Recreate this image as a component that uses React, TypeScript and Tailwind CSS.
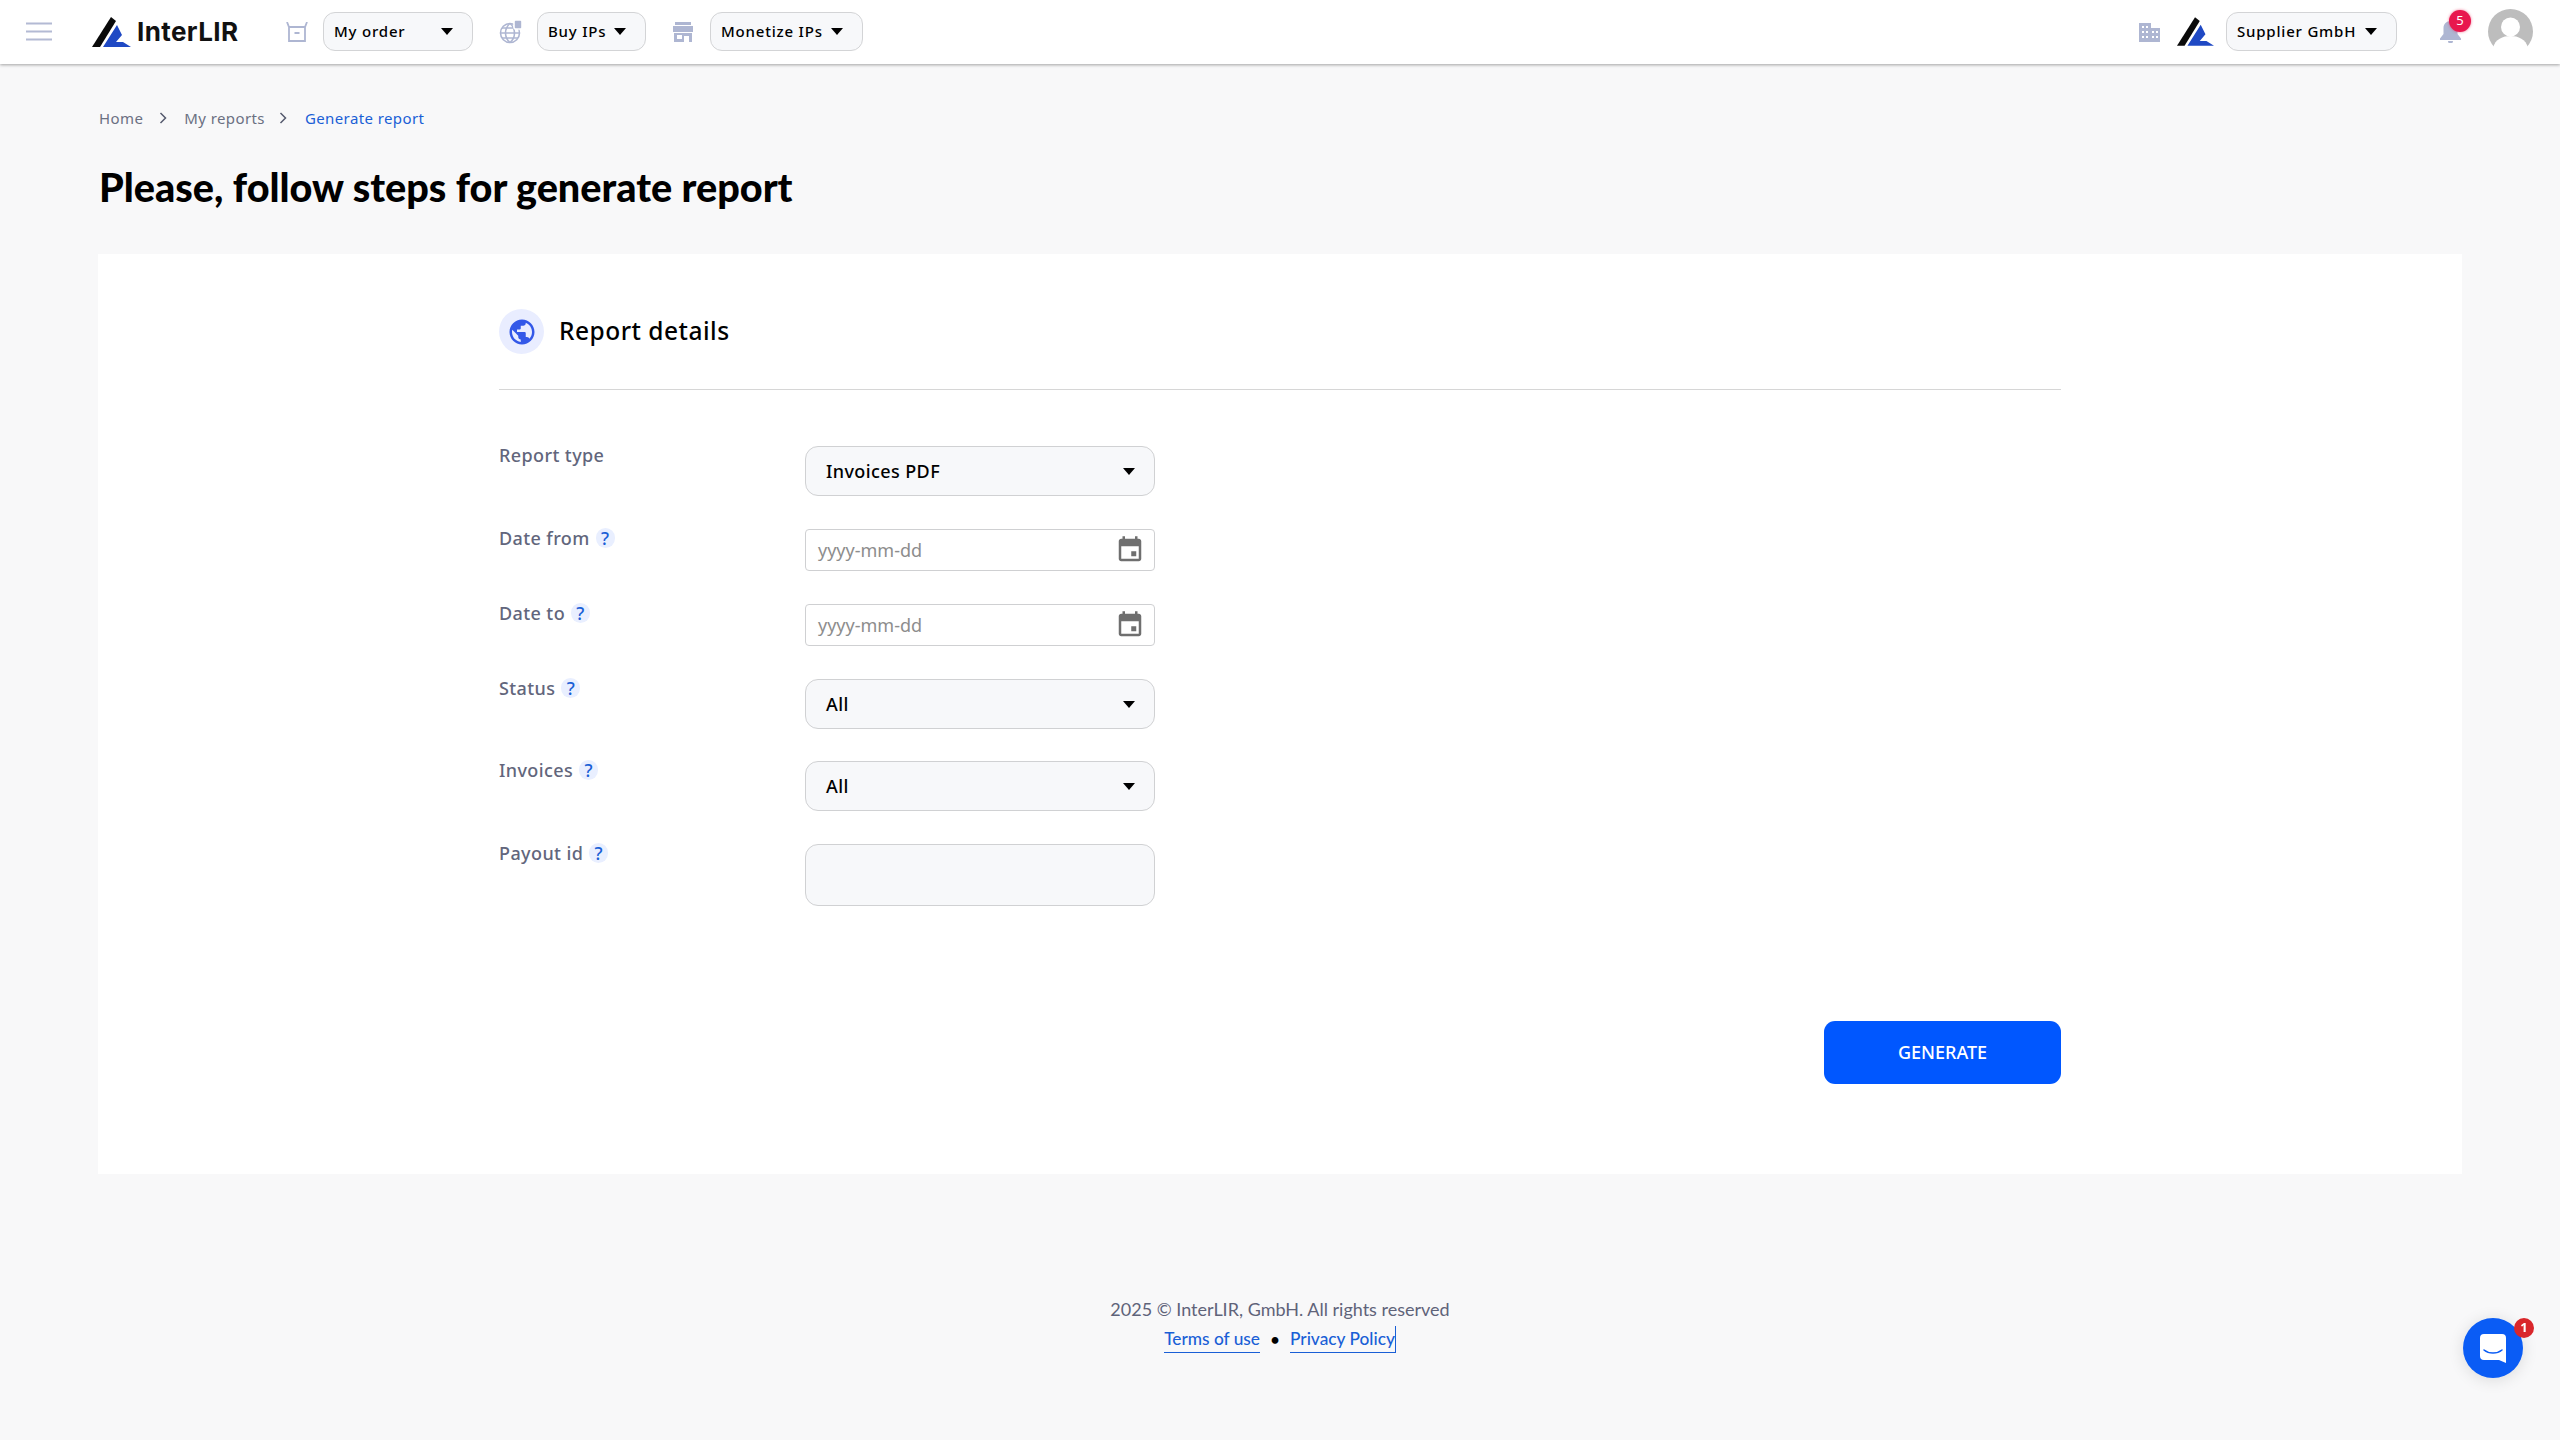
const uiFont = "font-['Noto_Sans',sans-serif]";
const titleFont = "font-['Lato',sans-serif]";

const Caret = ({ className = "" }: { className?: string }) => (
  <span className={`inline-block w-0 h-0 border-l-[6px] border-r-[6px] border-t-[7px] border-l-transparent border-r-transparent border-t-black ${className}`} />
);

const LogoMark = ({ className = "" }: { className?: string }) => (
  <svg viewBox="0 0 39 30" className={className}>
    <path d="M0 30 L19 0 L24 4 L8 30 Z" fill="#0a0a0a" />
    <path d="M11 30 L25 8 L30 18 L24 25 L31 25 L39 30 Z" fill="#1f49c4" />
  </svg>
);

const NavPill = ({ label, width }: { label: string; width: string }) => (
  <button className={`h-[39px] ${width} flex items-center justify-between pl-[10px] pr-[11px] rounded-[12px] border border-[#d3d4d6] bg-[#f7f8fa] text-[15px] font-medium tracking-[0.8px] text-black`}>
    <span>{label}</span>
    <Caret className="mr-[8px]" />
  </button>
);

const Help = () => (
  <span className="inline-flex items-center justify-center w-[19px] h-[20px] ml-[6px] rounded-full bg-[#e9efff] text-[#1a5fd6] text-[18px] font-medium leading-none">?</span>
);

const Row = ({ label, help, mt, children }: { label: string; help?: boolean; mt: string; children: React.ReactNode }) => (
  <div className={`flex ${mt}`}>
    <div className="w-[306px] shrink-0 text-[18px] font-medium tracking-[0.4px] text-[#62667c]">
      <div className="flex items-center h-[18px]">
        {label}
        {help && <Help />}
      </div>
    </div>
    {children}
  </div>
);

const Select = ({ value }: { value: string }) => (
  <div className="w-[350px] h-[50px] flex items-center justify-between pl-[20px] pr-[14px] rounded-[13px] border border-[#d0d1d3] bg-[#f7f8fa] text-[18px] font-medium tracking-[0.4px] text-black">
    <span>{value}</span>
    <Caret className="mr-[5px]" />
  </div>
);

const DateInput = () => (
  <div className="w-[350px] h-[42px] flex items-center justify-between pl-[12px] pr-[9px] rounded-[4px] border border-[#cfd0d2] bg-white">
    <span className="text-[18px] text-[#8d8d8d]">yyyy-mm-dd</span>
    <svg viewBox="0 0 24 24" className="w-[30px] h-[30px]" fill="#6f6f6f">
      <path d="M19 3h-1V1h-2v2H8V1H6v2H5c-1.100 0-2 .9-2 2v14c0 1.100.9 2 2 2h14c1.100 0 2-.9 2-2V5c0-1.100-.9-2-2-2zm0 16H5V9h14v10zM13 13h4v4h-4z" />
    </svg>
  </div>
);

const rows = [
  { label: "Status", value: "All", mt: "mt-[33px]" },
  { label: "Invoices", value: "All", mt: "mt-[32px]" },
];

export default function App() {
  return (
    <div className={`min-h-[1440px] bg-[#f8f8f9] flex flex-col ${uiFont}`}>
      <header className="h-[64px] bg-white shadow-[0_1px_3px_rgba(0,0,0,0.35)] flex items-center pl-[26px] pr-[27px] pb-[1px]">
        <svg viewBox="0 0 26 19" className="w-[26px] h-[19px]" stroke="#b3bad4" strokeWidth="2">
          <path d="M0 1.500h26M0 9.500h26M0 17.500h26" />
        </svg>
        <LogoMark className="w-[39px] h-[30px] ml-[40px]" />
        <span className="ml-[6px] w-[101px] text-[26px] font-bold font-['Inter',sans-serif] tracking-[0.4px] text-[#111]">InterLIR</span>

        <svg viewBox="0 0 22 20" className="w-[22px] h-[20px] ml-[48px]" fill="none" stroke="#aeb6d2" strokeWidth="1.800">
          <path d="M1 0l2 5h16l2-5M3 5v14h16V5M8.500 11h5" />
        </svg>
        <div className="ml-[15px]"><NavPill label="My order" width="w-[150px]" /></div>
        <svg viewBox="0 0 24 24" className="w-[24px] h-[24px] ml-[26px]" fill="none" stroke="#aeb6d2" strokeWidth="1.600">
          <circle cx="11" cy="13" r="9.500" />
          <path d="M1.500 13h19M11 3.500c-6 5-6 14 0 19M11 3.500c6 5 6 14 0 19M3 8h16M3 18h16" />
          <rect x="15" y="0" width="8" height="9" rx="1.500" fill="#aeb6d2" stroke="#fff" />
        </svg>
        <div className="ml-[14px]"><NavPill label="Buy IPs" width="w-[109px]" /></div>
        <svg viewBox="0 0 20 20" className="w-[20px] h-[20px] ml-[27px]" fill="#aeb6d2">
          <path d="M2 0h16v3H2zM0 4h20v6H0zM1 11h18v9h-3v-6H11v6H1z" />
          <path d="M4 13h5v4H4z" fill="#fff" />
        </svg>
        <div className="ml-[17px]"><NavPill label="Monetize IPs" width="w-[153px]" /></div>

        <div className="ml-auto flex items-center">
          <svg viewBox="0 0 21 20" className="w-[21px] h-[20px]" fill="#aeb6d2">
            <path d="M0 1h12v5h9v14H0z" />
            <path d="M3 4h2v2H3zM7 4h2v2H7zM3 9h2v2H3zM7 9h2v2H7zM3 14h2v2H3zM7 14h2v2H7zM13 9h2v2h-2zM17 9h2v2h-2zM13 14h2v2h-2zM17 14h2v2h-2z" fill="#fff" />
          </svg>
          <LogoMark className="w-[37px] h-[29px] ml-[17px]" />
          <div className="ml-[12px]"><NavPill label="Supplier GmbH" width="w-[171px]" /></div>
          <div className="relative ml-[43px] w-[21px] h-[22px]">
            <svg viewBox="0 0 21 22" className="w-[21px] h-[22px]" fill="#aeb6d2">
              <path d="M10.500 0c-4 0-7 3-7 7v6L0 17.500V19h21v-1.500L17.500 13V7c0-4-3-7-7-7zM8 20h5a2.500 2.500 0 0 1-5 0z" />
            </svg>
            <span className="absolute left-[9px] top-[-11px] w-[22px] h-[22px] rounded-full bg-[#e8174e] text-white text-[13px] flex items-center justify-center shadow-[0_0_3px_rgba(232,23,78,0.6)]">5</span>
          </div>
          <svg viewBox="0 0 45 45" className="w-[45px] h-[45px] ml-[27px]">
            <circle cx="22.500" cy="22.500" r="22.500" fill="#bdbdbd" />
            <circle cx="22.500" cy="18" r="9.500" fill="#fff" />
            <path d="M5 39c2-9 10-12 17.500-12S38 30 40 39a22.500 22.500 0 0 1-35 0z" fill="#fff" />
          </svg>
        </div>
      </header>

      <main className="px-[98px]">
        <nav className="mt-[44px] ml-[1px] h-[20px] flex items-center text-[15px] tracking-[0.4px] text-[#6b7082]">
          <span>Home</span>
          <svg viewBox="0 0 8 12" className="w-[8px] h-[12px] ml-[16px] mr-[17px]" fill="none" stroke="#555a6e" strokeWidth="1.500"><path d="M1.500 1l5 5-5 5" /></svg>
          <span>My reports</span>
          <svg viewBox="0 0 8 12" className="w-[8px] h-[12px] ml-[14px] mr-[18px]" fill="none" stroke="#555a6e" strokeWidth="1.500"><path d="M1.500 1l5 5-5 5" /></svg>
          <span className="text-[#1a5fd6]">Generate report</span>
        </nav>
        <h1 className={`mt-[31px] ml-[1px] text-[39.600px] leading-[56px] font-black text-black ${titleFont}`}>Please, follow steps for generate report</h1>

        <section className="mt-[39px] h-[920px] bg-white pt-[55px] pl-[401px] pr-[401px]">
          <div className="flex items-center h-[45px]">
            <span className="w-[45px] h-[45px] rounded-full bg-[#e9edff] flex items-center justify-center">
              <svg viewBox="0 0 24 24" className="w-[30px] h-[30px]" fill="#3358e8">
                <path d="M12 2C6.480 2 2 6.480 2 12s4.480 10 10 10 10-4.480 10-10S17.520 2 12 2zm-1 17.930c-3.950-.49-7-3.850-7-7.930 0-.62.08-1.210.21-1.790L9 15v1c0 1.100.9 2 2 2v1.930zm6.900-2.540c-.26-.81-1-1.390-1.900-1.390h-1v-3c0-.55-.45-1-1-1H8v-2h2c.55 0 1-.45 1-1V7h2c1.100 0 2-.9 2-2v-.41c2.930 1.190 5 4.060 5 7.410 0 2.080-.8 3.970-2.100 5.390z" />
              </svg>
            </span>
            <h2 className="ml-[15px] text-[24.500px] tracking-[0.5px] font-medium text-black">Report details</h2>
          </div>
          <div className="mt-[35px] h-[1px] bg-[#d6d6d6]" />

          <div className="mt-[56px]">
            <Row label="Report type" mt="mt-0"><Select value="Invoices PDF" /></Row>
            <Row label="Date from" help mt="mt-[33px]"><DateInput /></Row>
            <Row label="Date to" help mt="mt-[33px]"><DateInput /></Row>
            {rows.map((row) => (
              <Row key={row.label} label={row.label} help mt={row.mt}><Select value={row.value} /></Row>
            ))}
            <Row label="Payout id" help mt="mt-[33px]">
              <div className="w-[350px] h-[62px] rounded-[13px] border border-[#d0d1d3] bg-[#f7f8fa]" />
            </Row>
          </div>

          <div className="mt-[115px] flex justify-end">
            <button className="w-[237px] h-[63px] rounded-[11px] bg-[#0057ff] text-white text-[18px] font-medium">GENERATE</button>
          </div>
        </section>
      </main>

      <footer className={`mt-[122px] flex flex-col items-center text-[18px] text-[#5f6379] ${titleFont}`}>
        <p className="leading-[26px]">2025 © InterLIR, GmbH. All rights reserved</p>
        <div className="mt-[4px] flex items-center text-[17.300px] text-[#1a5fd6] font-medium">
          <a className="border-b border-[#1a5fd6] leading-[26px]">Terms of use</a>
          <span className="mx-[10px] text-black">•</span>
          <a className="border-b border-r border-[#1a5fd6] leading-[26px]">Privacy Policy</a>
        </div>
      </footer>

      <div className="fixed left-[2463px] top-[1318px] w-[60px] h-[60px] rounded-full bg-[#0a5cf5] shadow-[0_2px_16px_rgba(0,0,0,0.12)] flex items-center justify-center">
        <svg viewBox="0 0 26 29" className="w-[26px] h-[29px]">
          <path d="M4 0h18a4 4 0 0 1 4 4v25l-7-3H4a4 4 0 0 1-4-4V4a4 4 0 0 1 4-4z" fill="#fff" />
          <path d="M4 16c5 4 13 4 18 0" fill="none" stroke="#0a5cf5" strokeWidth="1.500" strokeLinecap="round" />
        </svg>
        <span className="absolute left-[51px] top-0 w-[20px] h-[20px] rounded-full bg-[#d9262b] text-white text-[13px] font-bold flex items-center justify-center">1</span>
      </div>
    </div>
  );
}
